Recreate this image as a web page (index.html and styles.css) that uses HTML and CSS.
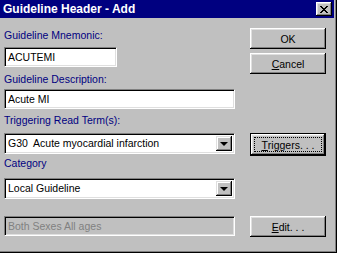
FILE: index.html
```html
<!DOCTYPE html>
<html lang="en">
<head>
    <meta charset="UTF-8">
    <title>Guideline Header - Add</title>
    <link rel="stylesheet" href="styles.css">
</head>
<body>
    <div class="window">
        <!-- Caption -->
        <div class="titlebar">
            <span class="title">Guideline Header - Add</span>
            <div class="close">
                <svg width="8" height="7" viewBox="0 0 8 7">
                    <path d="M0 0h2v1h1v1h2v-1h1v-1h2v1h-1v1h-1v1h-1v1h1v1h1v1h1v1h-2v-1h-1v-1h-2v1h-1v1h-2v-1h1v-1h1v-1h1v-1h-1v-1h-1v-1h-1z" fill="#000"/>
                </svg>
            </div>
        </div>

        <div class="content">
            <!-- Fields -->
            <div class="fields">
                <div class="lbl lbl-mnem">Guideline Mnemonic:</div>
                <div class="edit edit-mnem">ACUTEMI</div>

                <div class="lbl lbl-desc">Guideline Description:</div>
                <div class="edit edit-desc">Acute MI</div>

                <div class="lbl lbl-term">Triggering Read Term(s):</div>
                <div class="combo combo-term">
                    <span class="combo-text">G30  Acute myocardial infarction</span>
                    <span class="drop"><span class="arrow"></span></span>
                </div>

                <div class="lbl lbl-cat">Category</div>
                <div class="combo combo-cat">
                    <span class="combo-text">Local Guideline</span>
                    <span class="drop"><span class="arrow"></span></span>
                </div>

                <div class="edit edit-sex disabled">Both Sexes All ages</div>
            </div>

            <!-- Buttons -->
            <div class="buttons">
                <div class="btn btn-ok">OK</div>
                <div class="btn btn-cancel"><u>C</u>ancel</div>
                <div class="btn btn-triggers default"><span class="focus"><u>T</u>riggers. . .</span></div>
                <div class="btn btn-edit"><u>E</u>dit. . .</div>
            </div>
        </div>
    </div>
</body>
</html>
```

FILE: styles.css
```css
body {
    margin: 0;
    background-color: #c0c0c0;
    font-family: "Liberation Sans", Arial, sans-serif;
    font-size: 10.5px;
    color: #000;
}
.window {
    width: 337px;
    height: 253px;
    box-sizing: border-box;
    padding-right: 2px;
    border-right: 1px solid #000;
    border-bottom: 1px solid #000;
    box-shadow: inset -1px -1px #808080;
}
.titlebar {
    height: 18px;
    background-color: #000080;
    display: flex;
    align-items: center;
    justify-content: space-between;
    padding: 0 2px 0 3px;
}
.title {
    color: #fff;
    font-weight: bold;
    font-size: 12px;
}
.close {
    width: 16px;
    height: 14px;
    box-sizing: border-box;
    background-color: #c0c0c0;
    display: flex;
    align-items: center;
    justify-content: center;
    box-shadow: inset -1px -1px #000, inset 1px 1px #fff, inset -2px -2px #808080, inset 2px 2px #dfdfdf;
}
.content {
    display: flex;
    padding-left: 4px;
}
.fields {
    width: 231px;
}
.lbl {
    color: #000080;
    line-height: 13px;
}
.lbl-mnem { margin-top: 11px; }
.lbl-desc { margin-top: 6px; }
.lbl-term { margin-top: 5px; }
.lbl-cat { margin-top: 3px; }

.edit, .combo {
    box-sizing: border-box;
    height: 20px;
    background-color: #fff;
    border: 1px solid;
    border-color: #808080 #fff #fff #808080;
    box-shadow: inset 1px 1px #000, inset -1px -1px #dfdfdf;
    padding: 1px 3px;
    line-height: 16px;
    white-space: pre;
}
.edit-mnem {
    width: 113px;
    margin-top: 5px;
}
.edit-desc { margin-top: 3px; }
.combo {
    height: 21px;
    display: flex;
    justify-content: space-between;
    padding: 2px 2px 2px 3px;
    line-height: 15px;
}
.combo-term { margin-top: 6px; }
.combo-cat { margin-top: 8px; }
.drop {
    width: 16px;
    height: 15px;
    box-sizing: border-box;
    background-color: #c0c0c0;
    box-shadow: inset -1px -1px #000, inset 1px 1px #dfdfdf, inset -2px -2px #808080, inset 2px 2px #fff;
    display: flex;
    align-items: center;
    justify-content: center;
}
.arrow {
    width: 0;
    height: 0;
    border-left: 4px solid transparent;
    border-right: 4px solid transparent;
    border-top: 4px solid #000;
    margin-left: -1px;
}
.edit-sex { margin-top: 17px; }
.disabled {
    background-color: #c0c0c0;
    color: #808080;
}

.buttons {
    margin-left: 15px;
    width: 76px;
}
.btn {
    box-sizing: border-box;
    height: 21px;
    display: flex;
    align-items: center;
    justify-content: center;
    box-shadow: inset -1px -1px #000, inset 1px 1px #fff, inset -2px -2px #808080, inset 2px 2px #dfdfdf;
}
.btn u {
    text-decoration-thickness: 1px;
    text-underline-offset: 1px;
}
.btn-ok { margin-top: 10px; }
.btn-cancel { margin-top: 4px; }
.btn-triggers {
    margin-top: 59px;
    height: 23px;
}
.btn-edit { margin-top: 60px; }
.default {
    border: 1px solid #000;
}
.focus {
    flex: 1;
    align-self: stretch;
    margin: 3px;
    border: 1px dotted #000;
    display: flex;
    align-items: center;
    justify-content: center;
}
```
